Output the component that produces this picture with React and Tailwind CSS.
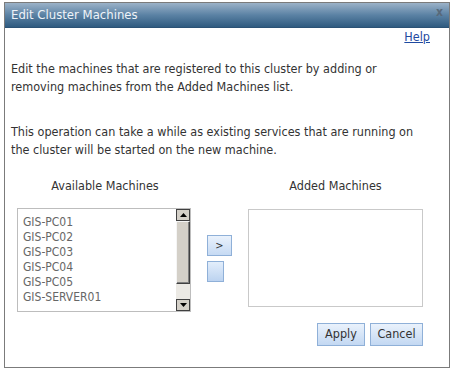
import React from 'react';

const font = { fontFamily: '"DejaVu Sans", Verdana, sans-serif' };

const machines = ['GIS-PC01', 'GIS-PC02', 'GIS-PC03', 'GIS-PC04', 'GIS-PC05', 'GIS-SERVER01'];

const Arrow = ({ up }) => (
  <div className="h-[12px] w-[14px] border border-[#404040] bg-[#d4d0c8] flex items-center justify-center">
    <svg width="7" height="4" viewBox="0 0 7 4">
      {up ? <path d="M0 4 L3.5 0 L7 4 Z" fill="#000" /> : <path d="M0 0 L3.5 4 L7 0 Z" fill="#000" />}
    </svg>
  </div>
);

const App = () => {
  return (
    <div className="w-[453px] h-[371px] bg-white pt-[2px] pl-[4px] font-stretch-condensed" style={font}>
      <div className="w-[446px] h-[366px] border border-[#7b7b7b] flex flex-col">
        {/* Title bar */}
        <div className="h-[25px] flex items-center justify-between px-[6px] bg-gradient-to-b from-[#9bb2c8] via-[#5b82a4] to-[#2f5b80] border-b border-[#2b5275]">
          <span className="text-[13px] text-[#eef3f8]">Edit Cluster Machines</span>
          <span className="text-[12px] font-bold text-[#58697a] -mt-[6px]">x</span>
        </div>

        <div className="flex-1 flex flex-col px-[6px]">
          <div className="flex justify-end pr-[13px] pt-[1px]">
            <a className="text-[12.5px] text-[#1f4aa0] underline leading-[16px]">Help</a>
          </div>

          <p className="mt-[15px] text-[12.5px] leading-[18px] text-[#333]">
            Edit the machines that are registered to this cluster by adding or<br />
            removing machines from the Added Machines list.
          </p>
          <p className="mt-[27px] text-[12.5px] leading-[18px] text-[#333]">
            This operation can take a while as existing services that are running on<br />
            the cluster will be started on the new machine.
          </p>

          <div className="flex mt-[19px]">
            {/* Available */}
            <div className="w-[174px] ml-[6px] flex flex-col">
              <div className="text-center text-[12.5px] text-[#333] leading-[16px] pl-[2px]">Available Machines</div>
              <div className="mt-[14px] h-[104px] border border-[#bdbdbd] flex">
                <div className="flex-1 pt-[6px] pl-[5px] flex flex-col text-[12px] leading-[15px] text-[#666]">
                  {machines.map((m) => (
                    <span key={m}>{m}</span>
                  ))}
                </div>
                <div className="w-[14px] flex flex-col bg-[#ebe9e4]">
                  <Arrow up />
                  <div className="h-[63px] border border-[#404040] border-t-[#f5f5f5] border-l-[#f5f5f5] bg-[#d4d0c8] shadow-[inset_-1px_-1px_0_#808080]" />
                  <div className="flex-1" />
                  <Arrow />
                </div>
              </div>
            </div>

            {/* Move buttons */}
            <div className="w-[57px] flex flex-col items-start pl-[16px] pt-[57px] gap-[5px]">
              <button className="w-[25px] h-[21px] border border-[#8fb0d8] bg-gradient-to-b from-[#eaf2fc] to-[#c6daf3] text-[11px] text-[#333] leading-none">&gt;</button>
              <button className="w-[17px] h-[21px] border border-[#8fb0d8] bg-gradient-to-b from-[#e3eefb] to-[#bcd3f0]" />
            </div>

            {/* Added */}
            <div className="w-[175px] flex flex-col">
              <div className="text-center text-[12.5px] text-[#333] leading-[16px]">Added Machines</div>
              <div className="mt-[15px] h-[98px] border border-[#c9c9c9]" />
              <div className="flex justify-end gap-[5px] mt-[16px]">
                <button className="w-[48px] h-[23px] border border-[#8fb0d8] bg-gradient-to-b from-[#eaf2fc] to-[#c3d8f2] text-[12.5px] text-[#333]">Apply</button>
                <button className="w-[53px] h-[23px] border border-[#8fb0d8] bg-gradient-to-b from-[#eaf2fc] to-[#c3d8f2] text-[12.5px] text-[#333]">Cancel</button>
              </div>
            </div>
          </div>
        </div>
      </div>
    </div>
  );
};

export default App;
